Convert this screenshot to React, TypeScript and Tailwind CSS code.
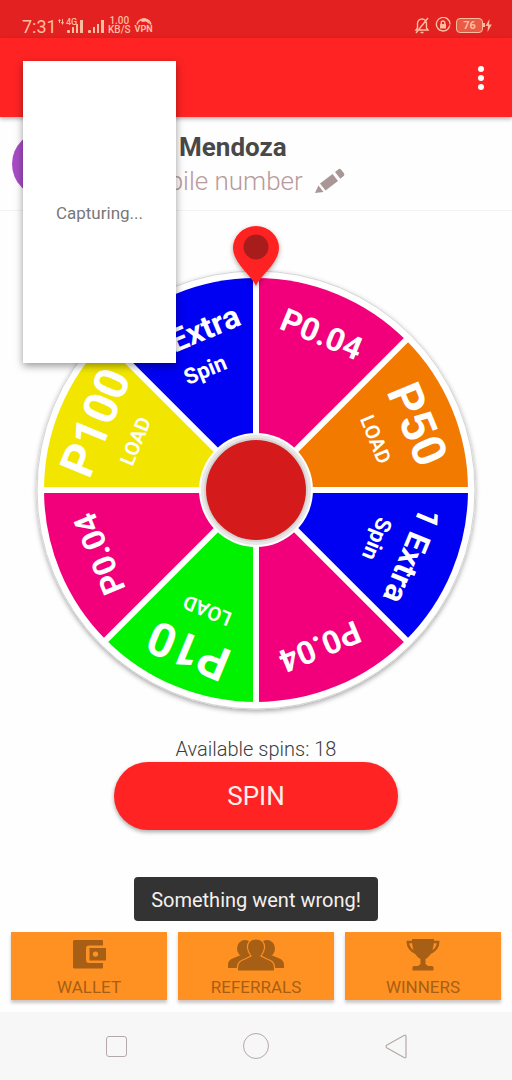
import React from 'react';

type Slice = {
  color: string;
  label: string;
  labelSize: number;
  sub?: string;
  subSize?: number;
  subWeight?: number;
};

const slices: Slice[] = [
  { color: '#f2007b', label: 'P0.04', labelSize: 32 },
  { color: '#f27a00', label: 'P50', labelSize: 47, sub: 'LOAD', subSize: 20, subWeight: 600 },
  { color: '#0000f2', label: '1 Extra', labelSize: 32, sub: 'Spin', subSize: 22, subWeight: 700 },
  { color: '#f2007b', label: 'P0.04', labelSize: 32 },
  { color: '#00f200', label: 'P10', labelSize: 47, sub: 'LOAD', subSize: 20, subWeight: 600 },
  { color: '#f2007b', label: 'P0.04', labelSize: 32 },
  { color: '#f2e600', label: 'P100', labelSize: 47, sub: 'LOAD', subSize: 20, subWeight: 600 },
  { color: '#0000f2', label: '1 Extra', labelSize: 32, sub: 'Spin', subSize: 22, subWeight: 700 },
];

function Wheel() {
  return (
    <svg viewBox="0 0 512 525" className="w-full max-w-[512px] block mx-auto" role="img" aria-label="Prize wheel">
      <defs>
        <filter id="soft" x="-20%" y="-20%" width="140%" height="140%">
          <feDropShadow dx="0" dy="2" stdDeviation="2.5" floodColor="#000" floodOpacity="0.35" />
        </filter>
      </defs>

      <circle cx="256" cy="279" r="219" fill="#fff" stroke="#d4d4d4" filter="url(#soft)" />

      {slices.map((slice, i) => (
        <g key={i} transform={`rotate(${i * 45} 256 279)`}>
          <path d="M256 279V67A212 212 0 0 1 405.9 129.1Z" fill={slice.color} />
        </g>
      ))}
      <g stroke="#fff" strokeWidth="6">
        {[0, 45, 90, 135].map((angle) => (
          <line key={angle} x1="256" y1="62" x2="256" y2="496" transform={`rotate(${angle} 256 279)`} />
        ))}
      </g>

      {slices.map((slice, i) => (
        <g
          key={i}
          transform={`rotate(${i * 45 + 22.5} 256 279)`}
          fill="#fff"
          textAnchor="middle"
          className="font-['Roboto',sans-serif]"
        >
          <text x="257" y="121" fontSize={slice.labelSize} fontWeight={700}>
            {slice.label}
          </text>
          {slice.sub && (
            <text x="255" y="156" fontSize={slice.subSize} fontWeight={slice.subWeight}>
              {slice.sub}
            </text>
          )}
        </g>
      ))}

      <circle cx="256" cy="279" r="57" fill="#fff" />
      <circle cx="256" cy="279" r="55" fill="#e9e6e6" />
      <circle cx="256" cy="279" r="52" fill="#d6d2d2" />
      <circle cx="256" cy="279" r="50" fill="#d41a1a" />

      <path
        d="M256 75C252 65 233 52 233 37A23 22 0 0 1 279 37C279 52 260 65 256 75Z"
        fill="#ff2323"
        filter="url(#soft)"
      />
      <circle cx="256" cy="36" r="12.5" fill="#a81c1c" />
    </svg>
  );
}

function SignalBars() {
  return (
    <svg viewBox="0 0 16 13" className="w-4 h-[13px]" fill="currentColor" aria-hidden="true">
      <rect x="0" y="10" width="3" height="3" rx="1" />
      <rect x="5" y="7" width="2" height="6" />
      <rect x="9" y="4" width="2" height="9" />
      <rect x="13" y="0" width="3" height="13" />
    </svg>
  );
}

function StatusBar() {
  return (
    <div className="h-[38px] bg-[#e32121] text-[#ffbda0] flex items-end justify-between pl-[22px] pr-5 pb-1">
      <div className="flex items-end">
        <span className="text-[18px] leading-[14px] w-9">7:31</span>
        <div className="relative flex items-end gap-[5px] pl-[9px] pb-[1px]">
          <span className="absolute left-0 -top-[3px] flex items-center gap-0.5 text-[9px] leading-[10px] font-medium">
            <svg viewBox="0 0 6 6" className="w-1.5 h-1.5" fill="currentColor" aria-hidden="true">
              <path d="M0 2L1.500 0L3 2H2V4H1V2ZM3 3H4V0H5V3H6L4.500 6Z" />
            </svg>
            4G
          </span>
          <SignalBars />
          <SignalBars />
        </div>
        <div className="ml-1 text-[10px] leading-[9px] font-medium text-center">
          <div>1.00</div>
          <div>KB/S</div>
        </div>
        <div className="ml-1 flex flex-col items-center">
          <svg viewBox="0 0 16 8" className="w-4 h-2" fill="none" stroke="currentColor" strokeWidth="1.5" aria-hidden="true">
            <path d="M1 7.500A7.200 6.700 0 0 1 15 7.500" />
            <path d="M4 2.500L8 1L12 2.500L14 7.500L10 4.500L6 5Z" fill="currentColor" stroke="none" />
          </svg>
          <span className="text-[9px] leading-[9px] font-bold">VPN</span>
        </div>
      </div>
      <div className="flex items-center gap-[5px] h-[18px]">
        <svg viewBox="0 0 16 17" className="w-4 h-[17px]" fill="none" stroke="currentColor" strokeWidth="1.400" aria-hidden="true">
          <path d="M2 13H14L12.500 11V6.500A4.500 4.500 0 0 0 3.500 6.500V11ZM6.500 15.500H9.500M14 1L2 16" />
        </svg>
        <svg viewBox="0 0 16 16" className="w-4 h-4" fill="none" stroke="currentColor" strokeWidth="1.400" aria-hidden="true">
          <path d="M13.500 11.500A6.800 6.800 0 1 1 15 7.500M14.800 8.500L13.500 11.500" />
          <rect x="5" y="7" width="6" height="4.500" fill="currentColor" stroke="none" />
          <path d="M6.200 7V5.800A1.800 1.800 0 0 1 9.800 5.800V7" />
        </svg>
        <div className="flex items-center">
          <div className="w-[27px] h-[15px] border border-current rounded-[4px] flex items-center justify-center bg-[#ea5a45] text-[11px] leading-[13px] font-bold">
            76
          </div>
          <div className="w-0.5 h-1 bg-current"></div>
          <svg viewBox="0 0 7 13" className="w-[7px] h-[13px]" fill="currentColor" aria-hidden="true">
            <path d="M4.500 0L0.500 7H3L2.500 13L6.800 5.500H4Z" />
          </svg>
        </div>
      </div>
    </div>
  );
}

function PencilIcon() {
  return (
    <svg viewBox="0 0 30 26" className="w-[30px] h-[26px]" fill="#a99797" aria-hidden="true">
      <path d="M0 25L3.500 17.500L8.500 24Z" />
      <path d="M5 15.500L17.500 6L23 13L10.500 22.500Z" />
      <path d="M20 4L23.500 1.200Q25 0.200 26.200 1.700L29 5.200Q30 6.700 28.700 7.900L25.300 10.700Z" />
    </svg>
  );
}

function WalletIcon() {
  return (
    <svg viewBox="0 0 34 32" className="w-[34px] h-8" fill="currentColor" aria-hidden="true">
      <path d="M2.500 1H30Q31 1 31 2V6.500H17Q14 6.500 14 9V21Q14 24 17 24H31V28.500Q31 29.500 30 29.500H2.500Q1 29.500 1 28V2.500Q1 1 2.500 1Z" />
      <path fillRule="evenodd" d="M17.500 9H34V21.500H17.500ZM23.500 12.400A2.700 2.700 0 1 0 23.500 17.800A2.700 2.700 0 1 0 23.500 12.400Z" />
    </svg>
  );
}

function PeopleIcon() {
  return (
    <svg viewBox="0 0 56 32" className="w-14 h-8" fill="currentColor" aria-hidden="true">
      <g id="sidePerson">
        <ellipse cx="17" cy="9.5" rx="8" ry="8.5" />
        <path d="M0 29V26C0 21.500 3 20 7 18.500L13 16H22V29Z" />
      </g>
      <use href="#sidePerson" transform="translate(56 0) scale(-1 1)" />
      <path
        d="M28 0C34 0 37 4 36.500 9C36.200 12.500 34.500 15 33 17L39 20C44 21.500 46.500 23.500 46.500 28V32H9.500V28C9.500 23.500 12 21.500 17 20L23 17C21.500 15 19.800 12.500 19.500 9C19 4 22 0 28 0Z"
        stroke="#ff9122"
        strokeWidth="1.200"
      />
    </svg>
  );
}

function TrophyIcon() {
  return (
    <svg viewBox="0 0 34 32" className="w-[34px] h-8" fill="currentColor" aria-hidden="true">
      <path d="M6 0H28C28 10 25 17 19.500 20V25L22 27H26Q27.500 27 27.500 28.500V31.500H6.500V28.500Q6.500 27 8 27H12L14.500 25V20C9 17 6 10 6 0Z" />
      <path d="M7 3H1.800C1.800 8 5 12 11 14.500M27 3H32.200C32.200 8 29 12 23 14.500" fill="none" stroke="currentColor" strokeWidth="2.500" />
    </svg>
  );
}

const menu = [
  { label: 'WALLET', icon: <WalletIcon /> },
  { label: 'REFERRALS', icon: <PeopleIcon /> },
  { label: 'WINNERS', icon: <TrophyIcon /> },
];

export default function App() {
  return (
    <div className="relative min-h-screen flex flex-col bg-[#fefefe] font-['Roboto',sans-serif]">
      <StatusBar />

      <header className="h-[79px] bg-[#ff2323] flex items-center justify-end pr-6 shadow-[0_2px_4px_rgba(0,0,0,0.3)]">
        <button type="button" aria-label="More options" className="flex flex-col gap-[3px] px-1">
          <span className="size-1.5 rounded-full bg-white"></span>
          <span className="size-1.5 rounded-full bg-white"></span>
          <span className="size-1.5 rounded-full bg-white"></span>
        </button>
      </header>

      <section className="h-[94px] flex items-center pl-3 border-b border-[#f3f3f3]">
        <div className="size-[66px] shrink-0 rounded-full bg-[#a74cc4]"></div>
        <div className="ml-[53px] pt-[3px]">
          <h1 className="pl-12 text-[26px] leading-8 font-bold text-[#484848]">Mendoza</h1>
          <div className="flex items-center gap-3">
            <span className="text-[26px] leading-9 font-light text-[#b99a9a]">mobile number</span>
            <button type="button" aria-label="Edit mobile number">
              <PencilIcon />
            </button>
          </div>
        </div>
      </section>

      <main className="flex-1 flex flex-col items-center">
        <Wheel />
        <p className="text-[20px] leading-[26px] font-light text-[#3c3c3c]">Available spins: 18</p>
        <button
          type="button"
          className="w-[284px] h-[68px] rounded-full bg-[#ff2323] text-[26px] text-[#fff0ec] shadow-[0_2px_4px_rgba(0,0,0,0.35)]"
        >
          SPIN
        </button>
        <div role="status" className="mt-[47px] h-11 px-[17px] pt-0.5 flex items-center rounded-[4px] bg-[#333] text-[20px] text-[#f5f0ee]">
          Something went wrong!
        </div>
      </main>

      <div className="grid grid-cols-3 gap-[11px] px-[11px] pt-[11px] pb-3">
        {menu.map((item) => (
          <button
            key={item.label}
            type="button"
            className="h-[68px] flex flex-col items-center pt-[7px] bg-[#ff9122] text-[#a65f14] shadow-[0_3px_3px_rgba(60,30,30,0.25)]"
          >
            {item.icon}
            <span className="mt-1 text-[17px] leading-6">{item.label}</span>
          </button>
        ))}
      </div>

      <nav className="h-[68px] bg-[#f7f7f7] flex items-center justify-center gap-[112px]">
        <button type="button" aria-label="Recent apps" className="w-7 flex justify-center">
          <span className="size-[21px] rounded-[3px] border border-[#b5a8a8]"></span>
        </button>
        <button type="button" aria-label="Home" className="w-7 flex justify-center">
          <span className="size-[26px] rounded-full border border-[#b5a8a8]"></span>
        </button>
        <button type="button" aria-label="Back" className="w-7 flex justify-center">
          <svg viewBox="0 0 22 25" className="w-[22px] h-[25px]" fill="none" stroke="#b5a8a8" strokeWidth="1.200" aria-hidden="true">
            <path d="M2 11L19 1.500Q21 0.500 21 2.500V22.500Q21 24.500 19 23.500L2 14Q0 12.500 2 11Z" />
          </svg>
        </button>
      </nav>

      <div
        role="dialog"
        aria-label="Screen capture"
        className="absolute left-[23px] top-[61px] w-[153px] h-[302px] pt-1 bg-white flex items-center justify-center text-[17px] text-[#777] shadow-[0_3px_8px_rgba(0,0,0,0.4)]"
      >
        Capturing...
      </div>
    </div>
  );
}
